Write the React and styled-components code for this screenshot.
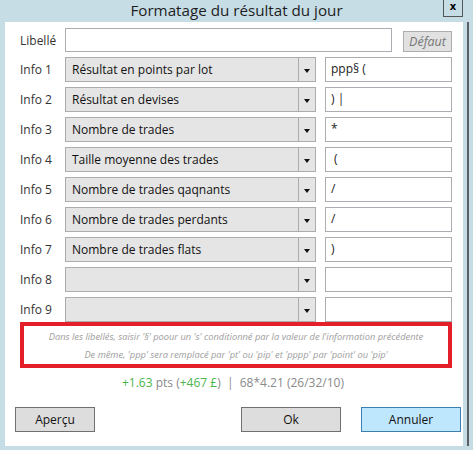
import React from "react";
import styled, { createGlobalStyle } from "styled-components";

const Global = createGlobalStyle`
  html, body { margin: 0; padding: 0; background: #c6dde6; }
  body { font-family: "Open Sans", "Noto Sans", sans-serif; }
  * { box-sizing: border-box; }
`;

const Window = styled.div`
  width: 473px;
  height: 450px;
  background: #c6dde6;
  display: flex;
  flex-direction: column;
`;

const TitleBar = styled.div`
  height: 22px;
  display: flex;
  align-items: flex-start;
  justify-content: center;
  position: relative;
`;

const Title = styled.div`
  font-size: 15.2px;
  color: #1e1e1e;
  line-height: 21px;
`;

const CloseBtn = styled.div`
  position: absolute;
  right: 10px;
  top: -1px;
  width: 20px;
  height: 18px;
  border: 1px solid #555;
  border-top: none;
  display: flex;
  align-items: center;
  justify-content: center;
  font-family: "DejaVu Sans", sans-serif;
  font-weight: bold;
  font-size: 10px;
  color: #000;
  padding-bottom: 2px;
`;

const Frame = styled.div`
  display: flex;
  align-items: stretch;
`;

const Edge = styled.div`
  width: 2px;
  height: 424px;
  margin-left: 4px;
  background: #5b5f62;
`;

const Body = styled.div`
  margin-left: 5px;
  width: 458px;
  height: 424px;
  background: #fff;
  padding: 6px 11px 0 15px;
  display: flex;
  flex-direction: column;
`;

const Row = styled.div`
  display: flex;
  align-items: center;
  height: ${(p) => p.h || 25}px;
  margin-bottom: 5px;
`;

const Label = styled.div`
  width: 45px;
  flex-shrink: 0;
  font-size: 12px;
  color: #333;
`;

const TextBox = styled.div`
  height: 100%;
  width: ${(p) => p.w}px;
  flex-shrink: 0;
  border: 1px solid #abadb3;
  background: #fff;
  font-size: 12px;
  color: #222;
  padding: 2px 5px;
  white-space: pre;
  display: flex;
  align-items: flex-start;
`;

const DefaultBtn = styled.div`
  margin-left: 11px;
  width: 49px;
  height: 21px;
  flex-shrink: 0;
  background: #e1e1e1;
  border: 1px solid #adadad;
  font-style: italic;
  font-size: 12.5px;
  color: #777;
  display: flex;
  align-items: center;
  justify-content: center;
  margin-top: 2px;
`;

const Select = styled.div`
  height: 100%;
  width: 251px;
  flex-shrink: 0;
  border: 1px solid #acacac;
  background: #e5e5e5;
  display: flex;
  margin-right: 9px;
`;

const SelectText = styled.div`
  flex: 1;
  font-size: 12px;
  color: #111;
  padding-left: 6px;
  display: flex;
  align-items: center;
`;

const Arrow = styled.div`
  width: 17px;
  border-left: 1px solid #acacac;
  display: flex;
  align-items: center;
  justify-content: center;
  &::after {
    content: "";
    border-left: 3.5px solid transparent;
    border-right: 3.5px solid transparent;
    border-top: 4px solid #111;
    margin-top: 2px;
  }
`;

const Hint = styled.div`
  margin-top: -5px;
  width: 432px;
  height: 46px;
  flex-shrink: 0;
  border: 4px solid #e3202a;
  display: flex;
  flex-direction: column;
  align-items: center;
  justify-content: center;
  gap: 7px;
  font-style: italic;
  font-size: 9.3px;
  color: #9d9d9d;
  line-height: 11px;
  white-space: nowrap;
  padding-top: 1px;
`;

const Status = styled.div`
  margin-top: 6px;
  text-align: center;
  font-size: 12px;
  color: #8a8a8a;
  padding-right: 6px;
`;

const Green = styled.span`
  color: #4cb54c;
`;

const Buttons = styled.div`
  margin-top: 16px;
  display: flex;
  align-items: center;
  margin-left: -5px;
`;

const Btn = styled.div`
  flex-shrink: 0;
  height: 25px;
  border: 1px solid ${(p) => (p.primary ? "#3c7fb1" : "#707070")};
  background: ${(p) => (p.primary ? "#bee6fd" : "#dddddd")};
  font-size: 12px;
  color: #111;
  display: flex;
  align-items: center;
  justify-content: center;
  margin-left: ${(p) => p.ml || 0}px;
  width: ${(p) => p.w || 80}px;
`;

const infos = [
  ["Résultat en points par lot", "ppp§ ("],
  ["Résultat en devises", ") |"],
  ["Nombre de trades", "*"],
  ["Taille moyenne des trades", " ("],
  ["Nombre de trades qaqnants", "/"],
  ["Nombre de trades perdants", "/"],
  ["Nombre de trades flats", ")"],
  ["", ""],
  ["", ""],
];

export default function App() {
  return (
    <>
      <Global />
      <Window>
        <TitleBar>
          <Title>Formatage du résultat du jour</Title>
          <CloseBtn>x</CloseBtn>
        </TitleBar>
        <Frame>
          <Body>
            <Row h={24}>
              <Label>Libellé</Label>
              <TextBox w={327} />
              <DefaultBtn>Défaut</DefaultBtn>
            </Row>
            {infos.map(([sel, txt], i) => (
              <Row key={i}>
                <Label>Info {i + 1}</Label>
                <Select>
                  <SelectText>{sel}</SelectText>
                  <Arrow />
                </Select>
                <TextBox w={127}>{txt}</TextBox>
              </Row>
            ))}
            <Hint>
              <div>Dans les libellés, saisir '§' poour un 's' conditionné par la valeur de l'information précédente</div>
              <div>De même, 'ppp' sera remplacé par 'pt' ou 'pip' et 'pppp' par 'point' ou 'pip'</div>
            </Hint>
            <Status>
              <Green>+1.63</Green> pts (<Green>+467 £</Green>)&nbsp; |&nbsp; 68*4.21 (26/32/10)
            </Status>
            <Buttons>
              <Btn>Aperçu</Btn>
              <Btn ml={146} w={100}>Ok</Btn>
              <Btn ml={20} w={100} primary>Annuler</Btn>
            </Buttons>
          </Body>
          <Edge />
        </Frame>
      </Window>
    </>
  );
}
